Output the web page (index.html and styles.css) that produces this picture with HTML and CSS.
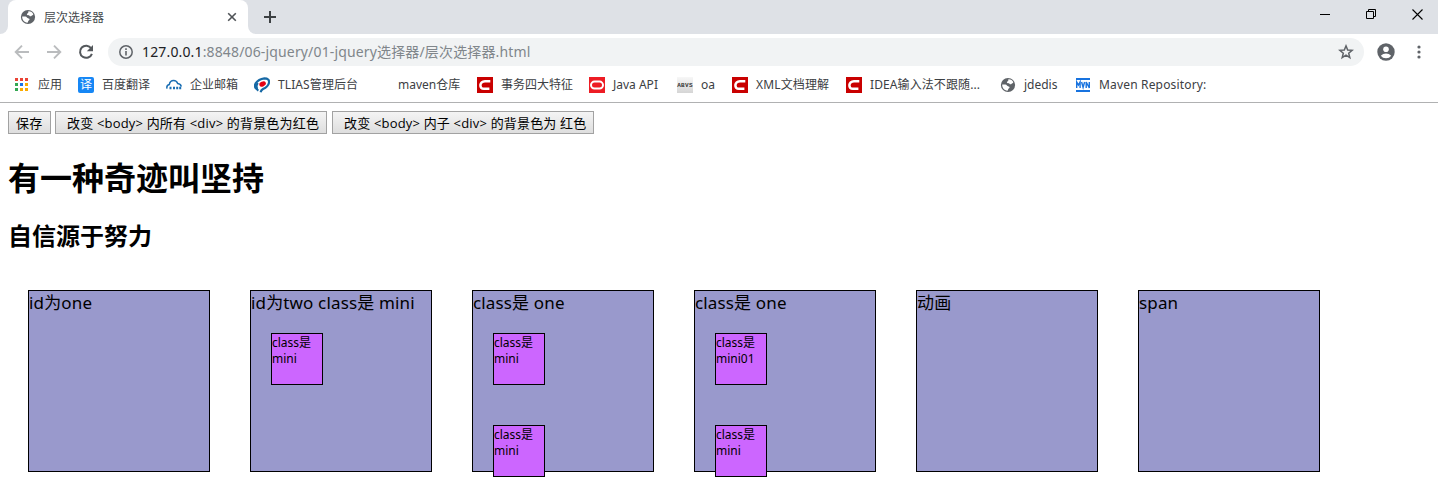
FILE: index.html
```html
<!DOCTYPE html>
<html lang="zh-CN">
<head>
<meta charset="utf-8">
<title>层次选择器</title>
<link rel="stylesheet" href="styles.css">
</head>
<body>
<svg class="defs" width="0" height="0">
  <symbol id="globe" viewBox="0 0 16 16"><circle cx="8" cy="8" r="7.1" fill="#5f6368"/><path d="M8.3 2.3 C10.5 2.1 12.6 3.4 13.3 5.2 C13 6.3 12 6.2 11.4 6.9 C10.8 7.7 9.8 7.2 9.3 6.4 C8.5 6 7.2 6.6 6.9 5.6 C6.8 4.4 8.9 4.3 8.3 2.3Z M2.2 7.6 H5.4 C7 7.8 6.8 9.4 8.6 9.4 C10 9.6 9.7 11 8.7 11.5 C7.9 12 8.3 13 7.4 13.7 C4.2 13.5 2 11 2.2 7.6Z" fill="#fff"/></symbol>
  <symbol id="csdn" viewBox="0 0 16 16"><path d="M0 0H16V16H0Z" fill="#c90000"/><path d="M13.3 4.3 H8 Q3.8 4.7 3.4 8 Q3.2 11.7 7 11.8 H12.4" fill="none" stroke="#fff" stroke-width="2.5"/></symbol>
</svg>
<header class="browser">
  <div class="tabstrip">
    <div class="edge"></div>
    <div class="tab">
      <svg width="16" height="16"><use href="#globe"/></svg>
      <span class="tab-title">层次选择器</span>
      <svg width="10" height="10" viewBox="0 0 10 10"><path d="M1.2 1.2L8.8 8.8M8.8 1.2L1.2 8.8" stroke="#4f5357" stroke-width="1.6"/></svg>
    </div>
    <div class="after-tab"><svg width="12" height="12" viewBox="0 0 12 12"><path d="M6 0V12M0 6H12" stroke="#3c4043" stroke-width="2"/></svg></div>
    <div class="window-controls">
      <svg width="10" height="11" viewBox="0 0 10 11"><path d="M0 5.5H10" stroke="#000"/></svg>
      <svg width="10" height="10" viewBox="0 0 10 10"><path d="M.5 2.5H7.5V9.5H.5ZM2.5 2.5V.5H9.5V7.5H7.5" fill="none" stroke="#000"/></svg>
      <svg width="11" height="11" viewBox="0 0 11 11"><path d="M.5 .5L10.5 10.5M10.5 .5L.5 10.5" stroke="#000" stroke-width="1.1"/></svg>
    </div>
  </div>
  <div class="toolbar">
    <svg width="16" height="16" viewBox="0 0 16 16"><path d="M15 8H2M8 1.7L1.7 8L8 14.3" fill="none" stroke="#babcbe" stroke-width="1.9"/></svg>
    <svg width="16" height="16" viewBox="0 0 16 16"><path d="M1 8H14M8 1.7L14.3 8L8 14.3" fill="none" stroke="#babcbe" stroke-width="1.9"/></svg>
    <svg width="16" height="16" viewBox="0 0 16 16"><path d="M13.2 4.3A6.1 6.1 0 1 0 13.9 9.8" fill="none" stroke="#54585c" stroke-width="2"/><path d="M15 1V7.2H8.8Z" fill="#54585c"/></svg>
    <div class="address">
      <svg width="14" height="14" viewBox="0 0 14 14"><circle cx="7" cy="7" r="6.2" fill="none" stroke="#5f6368" stroke-width="1.5"/><path d="M7 6V10.5M7 3.3V4.9" stroke="#5f6368" stroke-width="1.6"/></svg>
      <div class="url"><span class="host">127.0.0.1</span>:8848/06-jquery/01-jquery选择器/层次选择器.html</div>
      <svg width="16" height="16" viewBox="0 0 16 16"><path d="M8 1.9L9.7 6L14.1 6.3L10.7 9.2L11.8 13.6L8 11.2L4.2 13.6L5.3 9.2L1.9 6.3L6.3 6Z" fill="none" stroke="#5f6368" stroke-width="1.5"/></svg>
    </div>
    <svg class="avatar" width="18" height="18" viewBox="0 0 18 18"><circle cx="9" cy="9" r="8.7" fill="#5f6368"/><circle cx="9" cy="6.2" r="2.8" fill="#fff"/><path d="M3.8 12.7Q6 10.6 9 10.6T14.2 12.7Q12.4 15.3 9 15.3T3.8 12.7Z" fill="#fff"/></svg>
    <svg width="4" height="14" viewBox="0 0 4 14"><g fill="#5f6368"><circle cx="2" cy="2" r="1.6"/><circle cx="2" cy="7" r="1.6"/><circle cx="2" cy="12" r="1.6"/></g></svg>
  </div>
  <nav class="bookmarks">
    <a class="w24"><svg width="16" height="16" viewBox="0 0 16 16"><path d="M1 1h3v3H1zM6 1h3v3H6zM11 1h3v3h-3z" fill="#ea4335"/><path d="M1 6h3v3H1zM1 11h3v3H1z" fill="#34a853"/><path d="M6 6h3v3H6z" fill="#1a73e8"/><path d="M11 6h3v3h-3zM6 11h3v3H6zM11 11h3v3h-3z" fill="#fbab00"/></svg><span>应用</span></a>
    <a class="w48"><i class="fanyi">译</i><span>百度翻译</span></a>
    <a class="w48"><svg width="16" height="16" viewBox="0 0 16 16"><path d="M1 11.6Q.2 8.4 3.3 7.6Q4 3.6 7.6 3.6Q10.7 3.6 11.7 6.6Q15 7 15.2 9.6" fill="none" stroke="#1b6fb4" stroke-width="1.5"/><path d="M4.5 12.2V9.8M8 12.2V9.8M11.2 12.2V9.8M14.2 12.2V9.8" stroke="#1b6fb4" stroke-width="2"/></svg><span>企业邮箱</span></a>
    <a class="w80"><svg width="16" height="16" viewBox="0 0 16 16"><path d="M4.4 13.6Q-.6 10.6 1.6 6.4Q4.5 2.2 10.4 1.4Q15.6 1.4 15 5.6Q14.2 9.6 9 12Q7.2 13 6.6 15.2" fill="none" stroke="#1769a5" stroke-width="2.2"/><path d="M3.2 12.2Q1.6 9 3.8 6" fill="none" stroke="#1769a5" stroke-width="2"/><ellipse cx="8.6" cy="7" rx="3.4" ry="2.4" fill="#e60012" transform="rotate(-25 8.6 7)"/></svg><span>TLIAS管理后台</span></a>
    <a class="w63"><i class="blank"></i><span>maven仓库</span></a>
    <a class="w72"><svg width="16" height="16"><use href="#csdn"/></svg><span>事务四大特征</span></a>
    <a class="w48"><svg width="16" height="16" viewBox="0 0 16 16"><path d="M0 0H16V16H0Z" fill="#ed1c24"/><rect x="2" y="4.6" width="12" height="7" rx="3.5" fill="none" stroke="#fff" stroke-width="2"/></svg><span>Java API</span></a>
    <a class="w15"><i class="rbvs">ABVS</i><span>oa</span></a>
    <a class="w74"><svg width="16" height="16"><use href="#csdn"/></svg><span>XML文档理解</span></a>
    <a class="w114"><svg width="16" height="16"><use href="#csdn"/></svg><span>IDEA输入法不跟随...</span></a>
    <a class="w35"><svg width="16" height="16"><use href="#globe"/></svg><span>jdedis</span></a>
    <a class="w108"><svg width="16" height="16" viewBox="0 0 16 16"><path d="M1 2H15M1 14H15" stroke="#1873df" stroke-width="2"/><path d="M1.7 11V5L3.4 8L5.1 5V11M6.6 5L8.1 10.4L9.6 5M11.2 11V5L14.3 11V5" fill="none" stroke="#1873df" stroke-width="1.4"/></svg><span>Maven Repository:</span></a>
  </nav>
</header>
<main>
  <div class="actions">
    <button class="b1">保存</button>
    <button class="b2">改变 &lt;body&gt; 内所有 &lt;div&gt; 的背景色为红色</button>
    <button class="b3">改变 &lt;body&gt; 内子 &lt;div&gt; 的背景色为 红色</button>
  </div>
  <h1>有一种奇迹叫坚持</h1>
  <h2>自信源于努力</h2>
  <section class="boxes">
    <div class="box">id为one</div>
    <div class="box">id为two class是 mini<div class="mini">class是 mini</div></div>
    <div class="box">class是 one<div class="mini">class是 mini</div><div class="mini">class是 mini</div></div>
    <div class="box">class是 one<div class="mini">class是 mini01</div><div class="mini">class是 mini</div></div>
    <div class="box">动画</div>
    <div class="box">span</div>
  </section>
</main>
</body>
</html>
```
FILE: styles.css
```css
* { box-sizing: border-box; }
body { margin: 0; background: #fff; color: #000; font-family: "Noto Sans", "Noto Sans CJK SC", sans-serif; overflow: hidden; height: 500px; }
svg { display: block; flex: none; }
.defs { position: absolute; }
.browser { height: 103px; border-bottom: 1px solid #b0b1b2; }
.tabstrip { height: 34px; display: flex; background: #fff; }
.edge { width: 8px; background: #dee1e6; border-bottom-right-radius: 8px; }
.tab { width: 240px; display: flex; align-items: center; padding: 0 11px 0 12px; background: linear-gradient(#dee1e6, #dee1e6) 0 0 / 100% 10px no-repeat; position: relative; }
.tab::before { content: ""; position: absolute; inset: 0; background: #fff; border-radius: 8px 8px 0 0; }
.tab > * { position: relative; }
.tab-title { flex: 1; margin-left: 8px; font-size: 12px; line-height: 16px; padding-top: 1px; color: #45494d; }
.after-tab { background: #dee1e6; border-bottom-left-radius: 8px; padding: 11px 0 0 16px; width: 60px; }
.window-controls { flex: 1; background: #dee1e6; display: flex; justify-content: flex-end; padding: 9px 15px 0 0; gap: 36px; }
.toolbar { height: 36px; display: flex; align-items: center; padding-left: 14px; }
.toolbar > svg { margin-right: 16px; }
.toolbar > svg:nth-child(3) { margin-right: 14px; }
.address { width: 1256px; height: 28px; border-radius: 14px; background: #f1f3f4; display: flex; align-items: center; padding: 0 10px 0 11px; }
.url { flex: 1; margin-left: 9px; font-size: 14px; line-height: 20px; letter-spacing: .15px; color: #80868b; white-space: nowrap; }
.host { color: #202124; }
.toolbar > .avatar { margin: 0 22px 0 13px; }
.bookmarks { height: 30px; display: flex; align-items: center; padding-left: 14px; gap: 16px; font-size: 12px; line-height: 18px; color: #3c4043; }
.bookmarks a { display: flex; align-items: center; gap: 8px; }
.bookmarks span { white-space: nowrap; }
.bookmarks i { width: 16px; height: 16px; flex: none; font-style: normal; text-align: center; }
.bookmarks .fanyi { background: #1687f5; border-radius: 2px; color: #fff; font-size: 12px; line-height: 15px; }
.bookmarks .rbvs { background: linear-gradient(#f7f7f7, #d5d5d5); color: #333; font: bold 6px/17px "Liberation Mono", monospace; letter-spacing: .3px; }
.w15 span { width: 15px; } .w24 span { width: 24px; } .w35 span { width: 35px; }
.w48 span { width: 48px; } .w63 span { width: 63px; } .w72 span { width: 72px; }
.w74 span { width: 74px; letter-spacing: .15px; } .w80 span { width: 80px; letter-spacing: .1px; }
.w108 span { width: 108px; letter-spacing: .17px; }
.w114 span { width: 114px; letter-spacing: .1px; }
main { padding: 8px; }
.actions { display: flex; height: 23px; }
button { height: 23px; margin: 0; padding: 0 0 0 11px; border: 1px solid #a2a2a2; border-radius: 0; background: linear-gradient(#f4f4f4, #dedede); color: #000; font: 13px/20px "Open Sans", "Noto Sans CJK SC", sans-serif; letter-spacing: .18px; text-align: left; white-space: nowrap; }
.b1 { width: 43px; padding-left: 7px; }
.b2 { width: 272px; margin: 0 5px 0 4px; }
.b3 { width: 262px; }
h1 { font-size: 32px; line-height: 42px; margin: 23px 0 0; }
h2 { font-size: 24px; line-height: 32px; margin: 21px 0 0; }
.boxes { display: flex; gap: 40px; padding: 38px 0 0 20px; }
.box { width: 182px; height: 182px; padding-top: 1px; border: 1px solid #000; background: #9999cc; font-size: 17px; line-height: 22px; letter-spacing: .15px; white-space: nowrap; }
.mini { width: 52px; height: 52px; margin: 19px 0 0 20px; padding-top: 1px; border: 1px solid #000; background: #cc66ff; font-size: 12px; line-height: 16px; letter-spacing: 0; white-space: normal; }
.mini + .mini { margin-top: 40px; }
```
